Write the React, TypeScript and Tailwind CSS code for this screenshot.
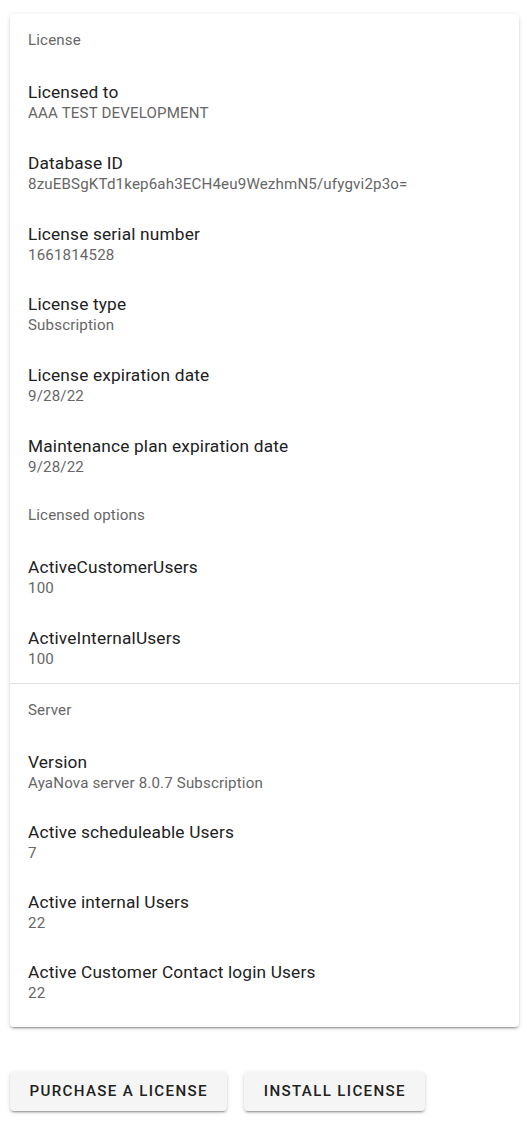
const licenseItems = [
  { title: "Licensed to", value: "AAA TEST DEVELOPMENT" },
  { title: "Database ID", value: "8zuEBSgKTd1kep6ah3ECH4eu9WezhmN5/ufygvi2p3o=" },
  { title: "License serial number", value: "1661814528" },
  { title: "License type", value: "Subscription" },
  { title: "License expiration date", value: "9/28/22" },
  { title: "Maintenance plan expiration date", value: "9/28/22" },
];

const optionItems = [
  { title: "ActiveCustomerUsers", value: "100" },
  { title: "ActiveInternalUsers", value: "100" },
];

const serverItems = [
  { title: "Version", value: "AyaNova server 8.0.7 Subscription" },
  { title: "Active scheduleable Users", value: "7" },
  { title: "Active internal Users", value: "22" },
  { title: "Active Customer Contact login Users", value: "22" },
];

const Subheader = ({ label }: { label: string }) => (
  <div className="h-[50px] pt-[13px] pl-[18px] text-[15.1px] leading-[21px] tracking-[0.15px] text-[#666666]">
    {label}
  </div>
);

const Item = ({ title, value, compact }: { title: string; value: string; compact?: boolean }) => (
  <div className={`${compact ? "h-[70.2px]" : "h-[70.8px]"} pt-[14px] pl-[18px] pr-4`}>
    <div className="text-[17.3px] leading-[22px] tracking-[0.16px] text-[#212121] truncate">{title}</div>
    <div className="text-[15.1px] leading-[21px] tracking-[0.16px] text-[#666666] truncate">{value}</div>
  </div>
);

const shadow =
  "shadow-[0_3px_1px_-2px_rgba(0,0,0,0.2),0_2px_2px_0_rgba(0,0,0,0.14),0_1px_5px_0_rgba(0,0,0,0.12)]";

export default function App() {
  return (
    <div className="min-h-screen bg-white pt-[13.5px] pb-4 font-['Roboto','Liberation_Sans',sans-serif]">
      <div className={`ml-[10px] w-[508.5px] rounded-[4px] bg-white ${shadow}`}>
        <div className="pt-[3.5px]">
          <Subheader label="License" />
          {licenseItems.map((it) => (
            <Item key={it.title} {...it} />
          ))}
          <Subheader label="Licensed options" />
          {optionItems.map((it) => (
            <Item key={it.title} {...it} />
          ))}
        </div>
        <div className="h-px bg-[#e0e0e0]" />
        <div className="pt-[2.5px] pb-[9.5px]">
          <Subheader label="Server" />
          {serverItems.map((it) => (
            <Item key={it.title} {...it} compact />
          ))}
        </div>
      </div>

      <div className="mt-[44.5px] ml-[10px] flex gap-[17px]">
        <button className={`h-[39px] px-[19.5px] rounded-[4px] bg-[#f5f5f5] text-[15.1px] font-medium uppercase tracking-[0.0892em] text-[#212121] ${shadow}`}>
          Purchase a license
        </button>
        <button className={`h-[39px] px-[19.5px] rounded-[4px] bg-[#f5f5f5] text-[15.1px] font-medium uppercase tracking-[0.0892em] text-[#212121] ${shadow}`}>
          Install license
        </button>
      </div>
    </div>
  );
}
